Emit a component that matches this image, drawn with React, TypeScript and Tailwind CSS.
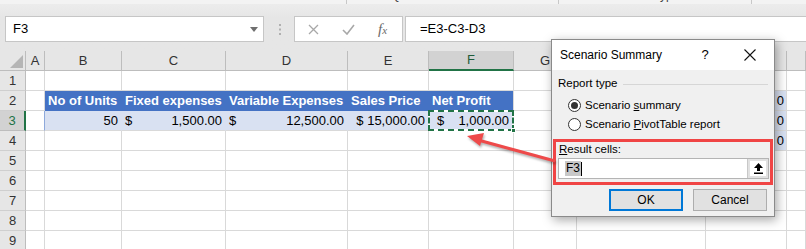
import React from "react";

const colW = [
  "w-[26px]",
  "w-[19px]",
  "w-[77px]",
  "w-[104px]",
  "w-[122px]",
  "w-[81px]",
  "w-[85px]",
  "w-[63px]",
  "w-[129px]",
  "w-[81px]",
  "w-[19px]",
];
// H and I sit under the dialog, so their letters are not drawn
const colLabels = ["", "A", "B", "C", "D", "E", "F", "G", "", "", ""];

function Cell({ i, className = "", children }: { i: number; className?: string; children?: React.ReactNode }) {
  return (
    <div className={`${colW[i]} h-[20px] shrink-0 border-r border-b border-[#d9d9d9] flex items-center overflow-hidden whitespace-nowrap ${className}`}>
      {children}
    </div>
  );
}

function RowHead({ n, active }: { n: number; active?: boolean }) {
  return (
    <div
      className={`w-[26px] h-[20px] shrink-0 border-b flex items-center justify-center text-[13px] ${
        active
          ? "bg-[#d2d2d2] text-[#217346] border-r-2 border-r-[#217346] border-b-[#bdbdbd]"
          : "bg-[#e6e6e6] text-[#333] border-r border-r-[#bdbdbd] border-b-[#cfcfcf]"
      }`}
    >
      {n}
    </div>
  );
}

function EmptyRow({ n }: { n: number }) {
  return (
    <div className="flex">
      <RowHead n={n} />
      {colW.slice(1).map((_, k) => (
        <Cell key={k} i={k + 1} />
      ))}
    </div>
  );
}

export default function App() {
  return (
    <div className="relative w-[806px] h-[249px] overflow-hidden bg-white font-['Liberation_Sans',Arial,sans-serif] text-[#000]">
      {/* ribbon remains */}
      <div className="flex h-[4px] overflow-hidden bg-[#f3f3f3] text-[12px] text-[#444]">
        <div className="w-[347px] border-r border-[#c8c8c8] text-center leading-[14px] -mt-[12px]">Get &amp; Transform Data</div>
        <div className="w-[212px] border-r border-[#c8c8c8] text-center leading-[14px] -mt-[12px]">Queries &amp; Connections</div>
        <div className="w-[193px] border-r border-[#c8c8c8] text-center leading-[14px] -mt-[12px]">Data Types</div>
      </div>

      {/* formula bar */}
      <div className="h-[47px] bg-gradient-to-b from-[#ececec] to-[#e6e6e6] to-30% pt-[12px]">
        <div className="flex h-[26px] items-stretch">
          <div className="ml-[5px] w-[259px] bg-white border border-[#c6c6c6] flex items-center pl-[7px] pr-[5px] text-[13px]">
            <span className="flex-1">F3</span>
            <svg width="8" height="5" viewBox="0 0 8 5">
              <path d="M0 0 L8 0 L4 5 Z" fill="#6f6f6f" />
            </svg>
          </div>
          <div className="w-[30px] flex items-center justify-center">
            <svg width="3" height="11" viewBox="0 0 3 11">
              <rect x="1" y="0" width="2" height="2" fill="#b0b0b0" />
              <rect x="1" y="4.5" width="2" height="2" fill="#b0b0b0" />
              <rect x="1" y="9" width="2" height="2" fill="#b0b0b0" />
            </svg>
          </div>
          <div className="w-[109px] bg-white border border-[#c6c6c6] flex items-center">
            <svg className="ml-[13px]" width="11" height="11" viewBox="0 0 11 11">
              <path d="M1 1 L10 10 M10 1 L1 10" stroke="#a8a8a8" strokeWidth="1.3" />
            </svg>
            <svg className="ml-[23px]" width="13" height="11" viewBox="0 0 13 11">
              <path d="M1 6 L5 10 L12 1" stroke="#a8a8a8" strokeWidth="1.6" fill="none" />
            </svg>
            <span className="ml-[23px] font-['Liberation_Serif',serif] italic text-[#6a6a6a] text-[15px] leading-none">
              f<span className="text-[11px]">x</span>
            </span>
          </div>
          <div className="ml-[2px] flex-1 bg-white border border-[#c6c6c6] border-r-0 flex items-center pl-[14px] text-[13px]">
            =E3-C3-D3
          </div>
        </div>
      </div>

      {/* sheet */}
      <div className="flex flex-col">
        <div className="flex">
          <div className="w-[26px] h-[20px] shrink-0 bg-[#e6e6e6] border-r border-b border-[#bdbdbd] flex items-end justify-end pr-[2px] pb-[2px]">
            <svg width="13" height="13" viewBox="0 0 13 13">
              <path d="M13 0 L13 13 L0 13 Z" fill="#b5b5b5" />
            </svg>
          </div>
          {colLabels.slice(1).map((l, k) =>
            l === "F" ? (
              <div
                key={k}
                className={`${colW[k + 1]} h-[20px] shrink-0 bg-[#d2d2d2] border-r border-[#bdbdbd] border-b-2 border-b-[#217346] flex items-center justify-center text-[13px] text-[#1e5c3a]`}
              >
                {l}
              </div>
            ) : (
              <div
                key={k}
                className={`${colW[k + 1]} h-[20px] shrink-0 bg-[#e6e6e6] border-r border-b border-[#bdbdbd] flex items-center justify-center text-[13px] text-[#333]`}
              >
                {l}
              </div>
            )
          )}
        </div>

        <EmptyRow n={1} />

        {/* row 2: table header */}
        <div className="flex">
          <RowHead n={2} />
          <Cell i={1} />
          <Cell i={2} className="bg-[#4472c4] border-r-[#4472c4] border-b-[#4472c4] text-white font-bold text-[13px] pl-[3px]">No of Units</Cell>
          <Cell i={3} className="bg-[#4472c4] border-r-[#4472c4] border-b-[#4472c4] text-white font-bold text-[13px] pl-[3px]">Fixed expenses</Cell>
          <Cell i={4} className="bg-[#4472c4] border-r-[#4472c4] border-b-[#4472c4] text-white font-bold text-[13px] pl-[3px]">Variable Expenses</Cell>
          <Cell i={5} className="bg-[#4472c4] border-r-[#4472c4] border-b-[#4472c4] text-white font-bold text-[13px] pl-[3px]">Sales Price</Cell>
          <Cell i={6} className="bg-[#4472c4] border-b-[#4472c4] text-white font-bold text-[13px] pl-[3px]">Net Profit</Cell>
          <Cell i={7} />
          <Cell i={8} />
          <Cell i={9} className="bg-[#d9e1f2] border-[#8ea9db] justify-end pr-[2px] text-[13px]">0</Cell>
          <Cell i={10} />
        </div>

        {/* row 3: values */}
        <div className="flex">
          <RowHead n={3} active />
          <Cell i={1} className="border-r-[#8ea9db]" />
          <Cell i={2} className="bg-[#d9e1f2] border-r-[#d9e1f2] justify-end pr-[3px] text-[13px]">50</Cell>
          <Cell i={3} className="bg-[#d9e1f2] border-r-[#d9e1f2] justify-between px-[3px] text-[13px]">
            <span>$</span>
            <span>1,500.00</span>
          </Cell>
          <Cell i={4} className="bg-[#d9e1f2] border-r-[#d9e1f2] justify-between px-[3px] text-[13px]">
            <span>$</span>
            <span>12,500.00</span>
          </Cell>
          <Cell i={5} className="bg-[#d9e1f2] border-r-[#d9e1f2] justify-end pr-[3px] text-[13px]">$ 15,000.00</Cell>
          <Cell i={6} className="relative bg-[#d9e1f2] justify-between pl-[8px] pr-[4px] text-[13px] overflow-visible">
            <span>$</span>
            <span>1,000.00</span>
            <div className="absolute -left-px -top-px w-[86px] h-[21px] border-2 border-white" />
            <div className="absolute -left-px -top-px w-[86px] h-[21px] border-2 border-dashed border-[#217346]" />
            <div className="absolute -right-[3px] -bottom-[3px] w-[5px] h-[5px] bg-[#217346] border border-white" />
          </Cell>
          <Cell i={7} />
          <Cell i={8} />
          <Cell i={9} className="bg-[#d9e1f2] border-[#8ea9db] justify-end pr-[2px] text-[13px]">0</Cell>
          <Cell i={10} />
        </div>

        <div className="flex">
          <RowHead n={4} />
          {colW.slice(1).map((_, k) =>
            k + 1 === 9 ? (
              <Cell key={k} i={9} className="bg-[#d9e1f2] border-[#8ea9db] justify-end pr-[2px] text-[13px]">0</Cell>
            ) : (
              <Cell key={k} i={k + 1} />
            )
          )}
        </div>
        <EmptyRow n={5} />
        <EmptyRow n={6} />
        <EmptyRow n={7} />
        <EmptyRow n={8} />
        <EmptyRow n={9} />
      </div>

      {/* dialog */}
      <div className="absolute left-[551px] top-[39px] w-[224px] h-[178px] border border-[#8a8a8a] bg-[#f0f0f0] shadow-[2px_3px_10px_rgba(0,0,0,0.35)] text-[11.5px] text-[#000] flex flex-col">
        <div className="h-[30px] bg-white flex items-center pl-[8px] text-[12px]">
          <span>Scenario Summary</span>
          <div className="flex-1" />
          <span className="w-[12px] text-center text-[13px]">?</span>
          <svg className="ml-[33px] mr-[18px]" width="12" height="12" viewBox="0 0 12 12">
            <path d="M0.5 0.5 L11.5 11.5 M11.5 0.5 L0.5 11.5" stroke="#111" strokeWidth="1.1" />
          </svg>
        </div>
        <div className="flex items-center pl-[6px] pr-[6px] mt-[7px] h-[14px]">
          <span>Report type</span>
          <div className="flex-1 ml-[6px] h-px bg-[#d6d6d6]" />
        </div>
        <div className="flex items-center pl-[16px] mt-[5px] h-[19px]">
          <div className="w-[13px] h-[13px] rounded-full border border-[#333] bg-white flex items-center justify-center">
            <div className="w-[7px] h-[7px] rounded-full bg-[#333]" />
          </div>
          <span className="ml-[4px]">
            Scenario <u>s</u>ummary
          </span>
        </div>
        <div className="flex items-center pl-[16px] h-[19px]">
          <div className="w-[13px] h-[13px] rounded-full border border-[#333] bg-white" />
          <span className="ml-[4px]">
            Scenario <u>P</u>ivotTable report
          </span>
        </div>
        <div className="ml-px mt-[5px] w-[220px] h-[46px] border-[3px] border-[#f04545] pl-[2px] pr-[1px] flex flex-col">
          <div className="h-[14px] flex items-center pl-[1px] mt-px">
            <span>
              <u>R</u>esult cells:
            </span>
          </div>
          <div className="mt-[1px] h-[21px] border border-[#b4b4b4] bg-white flex items-stretch">
            <div className="flex-1 flex items-center pl-[6px]">
              <span className="bg-[#c8c8c8] px-[1px] text-[12px] leading-[15px]">F3</span>
              <div className="w-px h-[14px] bg-black" />
            </div>
            <div className="w-[21px] border-l border-[#c8c8c8] bg-[#e1e1e1] p-[2px] flex">
              <div className="flex-1 bg-white flex items-center justify-center">
                <svg width="9" height="11" viewBox="0 0 9 11">
                  <path d="M4.5 0 L9 5 L6 5 L6 8 L3 8 L3 5 L0 5 Z" fill="#000" />
                  <rect x="0" y="9.5" width="9" height="1.5" fill="#000" />
                </svg>
              </div>
            </div>
          </div>
        </div>
        <div className="flex mt-[4px] pl-[57px] gap-[10px]">
          <div className="w-[74px] h-[22px] border-2 border-[#0078d7] bg-[#e1e1e1] flex items-center justify-center text-[12px]">OK</div>
          <div className="w-[74px] h-[22px] border border-[#adadad] bg-[#e1e1e1] flex items-center justify-center text-[12px]">Cancel</div>
        </div>
      </div>

      {/* callout arrow */}
      <svg className="absolute left-0 top-0 drop-shadow-[1px_2px_1px_rgba(0,0,0,0.3)]" width="806" height="249" viewBox="0 0 806 249">
        <line x1="478" y1="140" x2="555" y2="161" stroke="#ee4a4a" strokeWidth="3" />
        <path d="M467 136 L484 133 L480 146 Z" fill="#ee4a4a" />
      </svg>
    </div>
  );
}
